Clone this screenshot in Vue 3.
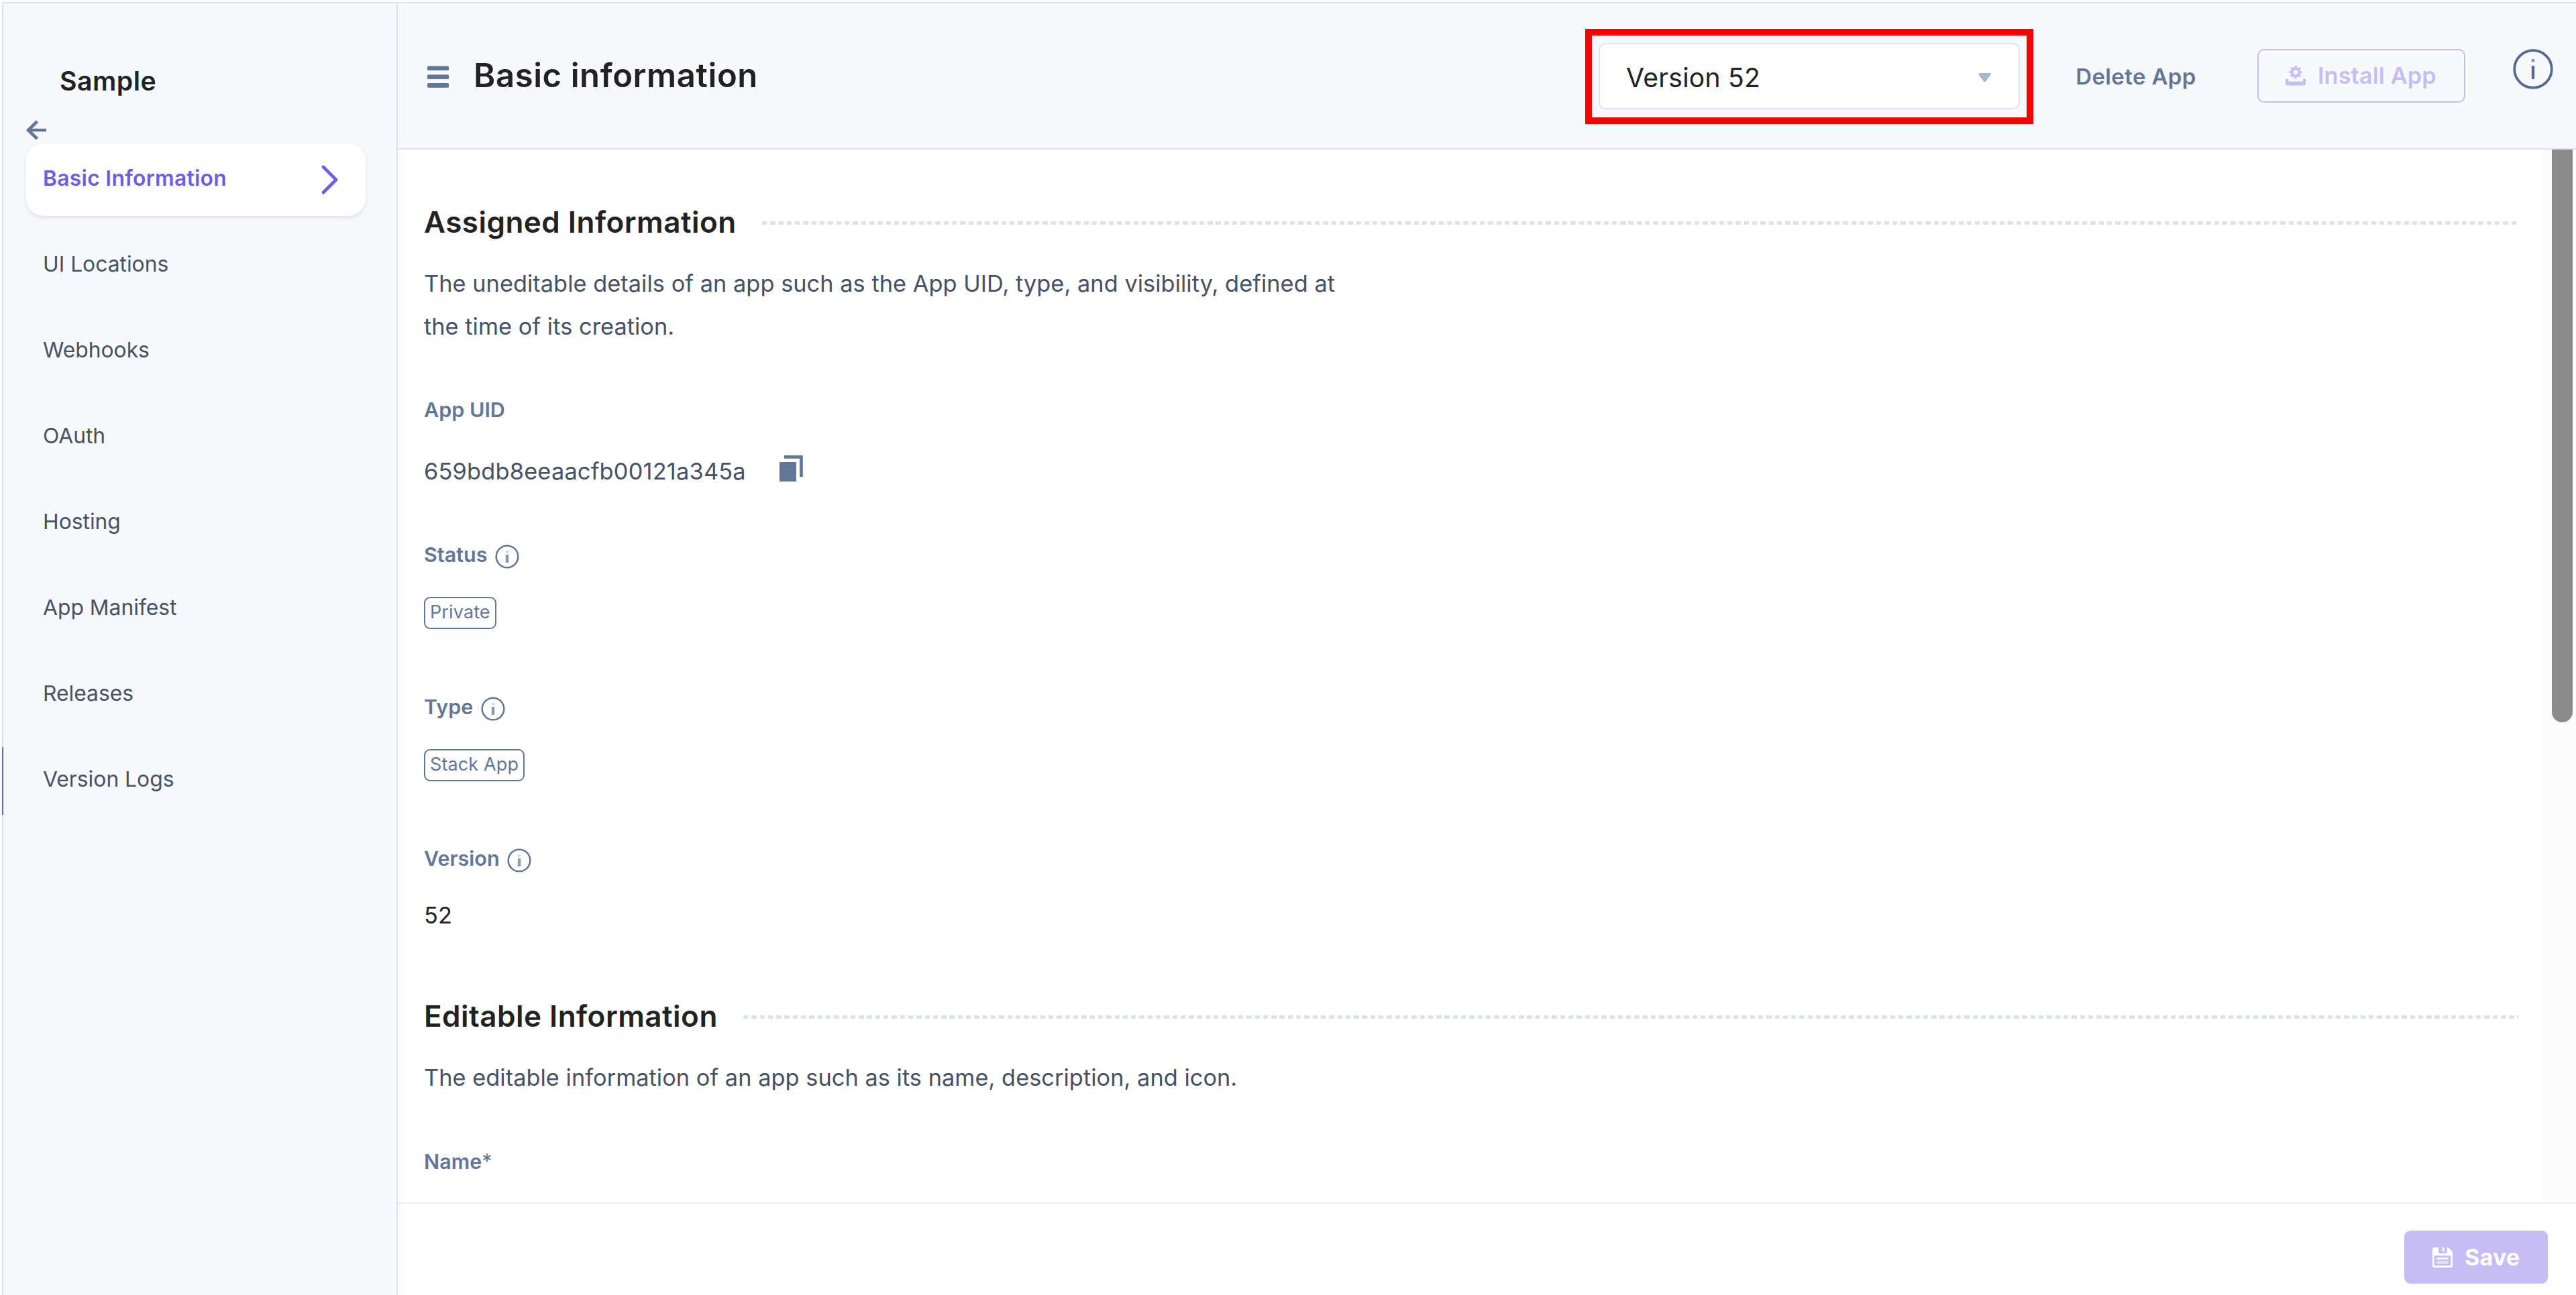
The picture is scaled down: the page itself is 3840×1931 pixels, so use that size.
<template>
  <div class="page">
    <aside class="sidebar">
      <h1 class="app-name">Sample</h1>
      <button class="back" type="button" aria-label="Back">
        <svg viewBox="0 0 30 30" width="30" height="30">
          <path d="M16.5 2 L3 15 L16.5 28 M3 15 H30" fill="none" stroke="currentColor" stroke-width="4.6" />
        </svg>
      </button>
      <nav class="nav">
        <a
          v-for="item in navItems"
          :key="item"
          class="nav-item"
          :class="{ active: item === activeItem, marked: item === 'Version Logs' }"
        >
          <span>{{ item }}</span>
          <svg v-if="item === activeItem" class="chevron" viewBox="0 0 26 44" width="26" height="44">
            <path d="M3 3 L22 22 L3 41" fill="none" stroke="currentColor" stroke-width="4.6" stroke-linecap="round" stroke-linejoin="round" />
          </svg>
        </a>
      </nav>
    </aside>

    <div class="main">
      <header class="header">
        <svg class="menu-icon" viewBox="0 0 32 34" width="32" height="34">
          <rect y="0.5" width="32" height="6.6" rx="1.5" fill="currentColor" />
          <rect y="13.3" width="32" height="6.6" rx="1.5" fill="currentColor" />
          <rect y="26.1" width="32" height="6.6" rx="1.5" fill="currentColor" />
        </svg>
        <h2 class="title">Basic information</h2>
        <div class="highlight">
          <div class="select">
            <span>Version 52</span>
            <svg viewBox="0 0 19 14" width="19" height="14">
              <path d="M2 0 H17 Q19.5 0.5 18 3 L11 12.5 Q9.5 14.5 8 12.5 L1 3 Q-0.5 0.5 2 0 Z" fill="#a9b6cb" />
            </svg>
          </div>
        </div>
        <button class="delete-btn" type="button">Delete App</button>
        <button class="install-btn" type="button">
          <svg viewBox="0 0 30 30" width="30" height="30">
            <circle cx="15" cy="9.7" r="5.4" fill="none" stroke="currentColor" stroke-width="4" />
            <circle cx="15" cy="9.7" r="8.3" fill="none" stroke="currentColor" stroke-width="2.8" stroke-dasharray="3.26 3.26" stroke-dashoffset="1.63" />
            <path d="M0 19.5 H4.2 V23.6 H25.8 V19.5 H30 V26.5 Q30 29.5 27 29.5 H3 Q0 29.5 0 26.5 Z" fill="currentColor" />
          </svg>
          <span>Install App</span>
        </button>
        <svg class="help-icon" viewBox="0 0 60 60" width="60" height="60">
          <circle cx="30" cy="30" r="27.8" fill="none" stroke="currentColor" stroke-width="3.8" />
          <rect x="27.8" y="15" width="4.4" height="4.4" rx="1" fill="currentColor" opacity="0.75" />
          <rect x="27.8" y="25" width="4.4" height="20" rx="1.5" fill="currentColor" />
        </svg>
      </header>

      <div class="body">
        <div class="content">
          <section class="section">
            <div class="section-head">
              <h3>Assigned Information</h3>
              <span class="rule"></span>
            </div>
            <p class="desc">
              The uneditable details of an app such as the App UID, type, and visibility, defined at the time of its creation.
            </p>
            <div class="field uid">
              <div class="label">App UID</div>
              <div class="value">
                <span>659bdb8eeaacfb00121a345a</span>
                <svg class="copy" viewBox="0 0 35 39" width="35" height="39">
                  <rect x="0" y="10" width="25" height="29" fill="currentColor" />
                  <path d="M7 2.4 H32.4 V32" fill="none" stroke="currentColor" stroke-width="4.8" />
                </svg>
              </div>
            </div>
            <div v-for="field in fields" :key="field.label" class="field">
              <div class="label">
                <span>{{ field.label }}</span>
                <svg class="info" viewBox="0 0 36 36" width="36" height="36">
                  <circle cx="18" cy="18" r="16.3" fill="none" stroke="currentColor" stroke-width="2.5" />
                  <rect x="15.8" y="9.5" width="4.4" height="2.8" fill="currentColor" opacity="0.35" />
                  <rect x="15.8" y="15" width="4.4" height="12" fill="currentColor" opacity="0.75" />
                </svg>
              </div>
              <div v-if="field.tag" class="tag">{{ field.value }}</div>
              <div v-else class="value dark">{{ field.value }}</div>
            </div>
          </section>

          <section class="section editable">
            <div class="section-head">
              <h3>Editable Information</h3>
              <span class="rule"></span>
            </div>
            <p class="desc">The editable information of an app such as its name, description, and icon.</p>
            <div class="field name">
              <div class="label">Name<span class="star">*</span></div>
            </div>
          </section>
        </div>
        <div class="scrollbar">
          <div class="thumb"></div>
        </div>
      </div>

      <footer class="footer">
        <button class="save-btn" type="button">
          <svg viewBox="0 0 30 30" width="30" height="30">
            <path
              fill="#fff"
              fill-rule="evenodd"
              d="M2 0 H9 V7 Q9 9 11 9 H20 Q22 9 22 7 V0 H23.5 L30 6.5 V28 Q30 30 28 30 H2 Q0 30 0 28 V2 Q0 0 2 0 Z M4.5 12.3 Q2.6 12.3 2.6 14 V25.6 Q2.6 27.3 4.5 27.3 H25.5 Q27.4 27.3 27.4 25.6 V14 Q27.4 12.3 25.5 12.3 Z"
            />
            <rect x="14.8" y="0" width="2.6" height="6" fill="#fff" />
            <rect x="6.5" y="15.4" width="17" height="2.6" fill="#fff" />
            <rect x="6.5" y="20" width="17" height="4.8" fill="#fff" opacity="0.5" />
          </svg>
          <span>Save</span>
        </button>
      </footer>
    </div>
  </div>
</template>

<script setup>
import { ref } from 'vue';

const navItems = [
  'Basic Information',
  'UI Locations',
  'Webhooks',
  'OAuth',
  'Hosting',
  'App Manifest',
  'Releases',
  'Version Logs',
];

const activeItem = ref('Basic Information');

const fields = [
  { label: 'Status', value: 'Private', tag: true },
  { label: 'Type', value: 'Stack App', tag: true },
  { label: 'Version', value: '52', tag: false },
];
</script>

<style>
body {
  margin: 0;
  background: #fff;
}
</style>

<style scoped>
.page {
  display: flex;
  box-sizing: border-box;
  width: 100vw;
  height: 1931px;
  padding: 3px 0 0 3px;
  overflow: hidden;
  color: #222;
  font-family: Inter, 'Liberation Sans', sans-serif;
}

h1,
h2,
h3,
p {
  margin: 0;
}

button {
  padding: 0;
  border: 0;
  background: transparent;
  font-family: inherit;
  cursor: pointer;
}

svg {
  display: block;
  flex: none;
}

.sidebar {
  flex: none;
  box-sizing: border-box;
  width: 590px;
  background: #f8f9fd;
  border: 2px solid #dde3ee;
  border-bottom: 0;
}

.app-name {
  padding: 92px 0 0 84px;
  font-size: 39.2px;
  font-weight: 600;
  letter-spacing: 0.5px;
  line-height: 48px;
}

.back {
  display: block;
  margin: 34px 0 0 34px;
  color: #647696;
}

.nav {
  display: flex;
  flex-direction: column;
  gap: 20px;
  margin-top: 5px;
}

.nav-item {
  display: flex;
  align-items: center;
  justify-content: space-between;
  box-sizing: border-box;
  height: 108px;
  margin: 0 46px 0 34px;
  padding: 0 40px 0 25px;
  color: #475161;
  font-size: 31.8px;
  line-height: 40px;
}

.nav-item span {
  padding-bottom: 4px;
}

.nav-item.active {
  border-radius: 26px;
  background: #fff;
  box-shadow: 0 3px 6px rgba(0, 0, 0, 0.1);
  color: #6c5ce7;
  font-weight: 600;
  letter-spacing: 0.3px;
}

.nav-item.marked {
  margin-left: -2px;
  padding-left: 61px;
  background: linear-gradient(#6c5ce7, #6c5ce7) 0 4px / 2px 101px no-repeat;
}

.main {
  display: flex;
  flex: 1;
  flex-direction: column;
  min-width: 0;
}

.header {
  display: flex;
  flex: none;
  align-items: flex-start;
  box-sizing: border-box;
  height: 220px;
  padding-left: 44px;
  background: #f8f9fd;
  border-top: 2px solid #dde3ee;
  border-bottom: 2px solid #dde3ee;
}

.menu-icon {
  margin-top: 93px;
  color: #647696;
}

.title {
  flex: 1;
  margin: 78px 0 0 37px;
  font-size: 49px;
  font-weight: 600;
  letter-spacing: 0.6px;
  line-height: 60px;
}

/* red frame around the version picker */
.highlight {
  box-sizing: border-box;
  width: 668px;
  height: 142px;
  margin-top: 38px;
  padding: 11px 10px;
  border: 10px solid #f00;
}

.select {
  display: flex;
  align-items: center;
  justify-content: space-between;
  box-sizing: border-box;
  width: 628px;
  height: 99px;
  padding: 5px 41px 0 39px;
  border: 2px solid #dde3ee;
  border-radius: 10px;
  background: #fff;
  font-size: 39.2px;
  letter-spacing: 0.2px;
  line-height: 48px;
}

.delete-btn {
  width: 182px;
  margin: 88px 0 0 62px;
  color: #647696;
  font-size: 33px;
  font-weight: 600;
  letter-spacing: 0.35px;
  line-height: 42px;
  white-space: nowrap;
}

.install-btn {
  display: flex;
  align-items: center;
  box-sizing: border-box;
  width: 310px;
  height: 80px;
  margin: 68px 0 0 90px;
  padding-left: 40px;
  border: 2.4px solid #c5bdf4;
  border-radius: 10px;
  color: #c5bdf4;
  font-size: 34.3px;
  font-weight: 600;
  letter-spacing: 0.1px;
  line-height: 42px;
}

.install-btn span {
  margin-left: 18px;
}

.help-icon {
  margin: 68px 34px 0 71px;
  color: #56698f;
}

.body {
  display: flex;
  flex: 1;
  min-height: 0;
  overflow: hidden;
}

.content {
  flex: 1;
  padding: 81px 37px 0 39px;
}

.section.editable {
  margin-top: 101px;
}

.section-head {
  display: flex;
  align-items: center;
  gap: 38px;
}

.section-head h3 {
  font-size: 44px;
  font-weight: 600;
  letter-spacing: 0.48px;
  line-height: 54px;
}

.rule {
  flex: 1;
  height: 5px;
  margin-top: 2px;
  background: repeating-linear-gradient(90deg, #dde3ee 0 7.3px, transparent 7.3px 12.3px);
}

.desc {
  width: 1400px;
  margin-top: 33px;
  color: #475161;
  font-size: 34.3px;
  letter-spacing: 0.05px;
  line-height: 64px;
}

.field {
  margin-top: 95.5px;
}

.field.uid {
  margin-top: 72px;
}

.field.uid + .field {
  margin-top: 82px;
}

.field.name {
  margin-top: 73px;
}

.label {
  display: flex;
  align-items: center;
  height: 40px;
  color: #647696;
  font-size: 30.5px;
  font-weight: 600;
  line-height: 40px;
}

.star {
  font-weight: 400;
}

.info {
  margin: 6px 0 0 11.5px;
}

.value {
  display: flex;
  align-items: center;
  height: 44px;
  margin-top: 43px;
  color: #475161;
  font-size: 34.3px;
  letter-spacing: 0.22px;
  line-height: 44px;
}

.uid .value {
  margin-top: 50px;
}

.value.dark {
  color: #222;
}

.copy {
  margin: -9px 0 0 50px;
  color: #647696;
}

.tag {
  box-sizing: border-box;
  width: fit-content;
  height: 48px;
  margin-top: 43px;
  padding: 0 7px;
  border: 2.4px solid #647696;
  border-radius: 9px;
  color: #647696;
  font-size: 27px;
  letter-spacing: 0.12px;
  line-height: 42px;
}

.scrollbar {
  flex: none;
  box-sizing: border-box;
  width: 49px;
  padding-left: 13px;
  background: #fbfbfb;
}

.thumb {
  width: 31px;
  height: 854px;
  border-radius: 0 0 16px 16px;
  background: #8b8b8b;
}

.footer {
  display: flex;
  flex: none;
  justify-content: flex-end;
  box-sizing: border-box;
  height: 138px;
  padding: 40px 42px 0 0;
  border-top: 2px solid #edf1f7;
  background: #fff;
}

.save-btn {
  display: flex;
  align-items: center;
  box-sizing: border-box;
  width: 214px;
  height: 79px;
  padding-left: 42px;
  border-radius: 9px;
  background: #c5bdf4;
  color: #fff;
  font-size: 34.3px;
  font-weight: 700;
  line-height: 42px;
}

.save-btn span {
  margin-left: 18px;
}
</style>
